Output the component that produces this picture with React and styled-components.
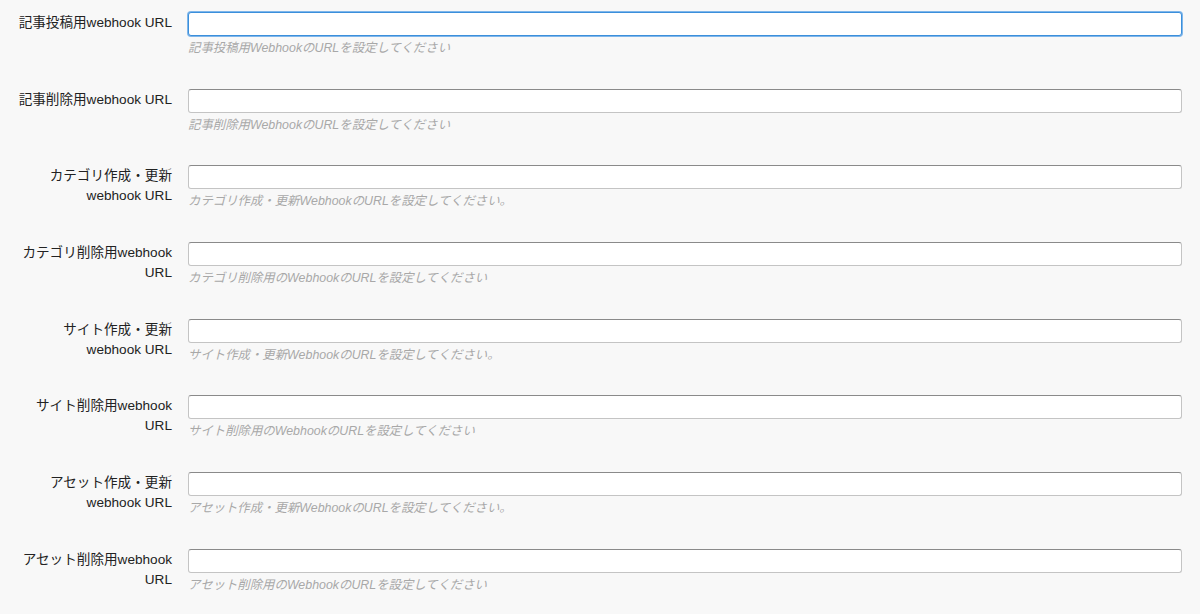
import React from 'react';
import styled, { createGlobalStyle } from 'styled-components';

const GlobalStyle = createGlobalStyle`
  body {
    margin: 0;
    background: #f8f8f8;
    font-family: "Liberation Sans", "Noto Sans CJK JP", sans-serif;
    color: #222;
  }
`;

const Form = styled.div`
  padding: 12px 18px 0 0;
`;

const Row = styled.div`
  display: grid;
  grid-template-columns: 172px 1fr;
  column-gap: 16px;
  margin-bottom: 32.7px;
`;

const Label = styled.label`
  padding-left: 14px;
  padding-top: 1px;
  text-align: right;
  font-size: 13.6px;
  line-height: 20px;
  color: #222;
`;

const Field = styled.div`
  display: flex;
  flex-direction: column;
`;

const Input = styled.input`
  box-sizing: border-box;
  width: 100%;
  height: 24px;
  margin: 0;
  padding: 2px 6px;
  font-size: 13px;
  background: #fff;
  border: 1px solid ${p => (p.$focused ? '#3b8fdb' : '#c4c4c4')};
  border-top-color: ${p => (p.$focused ? '#3b8fdb' : '#8a8a8a')};
  border-radius: 3px;
  box-shadow: ${p => (p.$focused ? '0 0 0 1px #7fb6ea' : 'none')};
  outline: none;
  caret-color: #222;
`;

const Help = styled.p`
  margin: 4px 0 0;
  font-size: 12.4px;
  line-height: 16px;
  font-style: italic;
  color: #a8a8a8;
`;

const fields = [
  { label: '記事投稿用webhook URL', help: '記事投稿用WebhookのURLを設定してください' },
  { label: '記事削除用webhook URL', help: '記事削除用WebhookのURLを設定してください' },
  { label: <>カテゴリ作成・更新<br />webhook URL</>, help: 'カテゴリ作成・更新WebhookのURLを設定してください。' },
  { label: <>カテゴリ削除用webhook<br />URL</>, help: 'カテゴリ削除用のWebhookのURLを設定してください' },
  { label: <>サイト作成・更新<br />webhook URL</>, help: 'サイト作成・更新WebhookのURLを設定してください。' },
  { label: <>サイト削除用webhook<br />URL</>, help: 'サイト削除用のWebhookのURLを設定してください' },
  { label: <>アセット作成・更新<br />webhook URL</>, help: 'アセット作成・更新WebhookのURLを設定してください。' },
  { label: <>アセット削除用webhook<br />URL</>, help: 'アセット削除用のWebhookのURLを設定してください' },
];

export default function App() {
  return (
    <>
      <GlobalStyle />
      <Form>
        {fields.map((f, i) => (
          <Row key={i}>
            <Label>{f.label}</Label>
            <Field>
              <Input type="text" $focused={i === 0} defaultValue="" autoFocus={i === 0} />
              <Help>{f.help}</Help>
            </Field>
          </Row>
        ))}
      </Form>
    </>
  );
}
